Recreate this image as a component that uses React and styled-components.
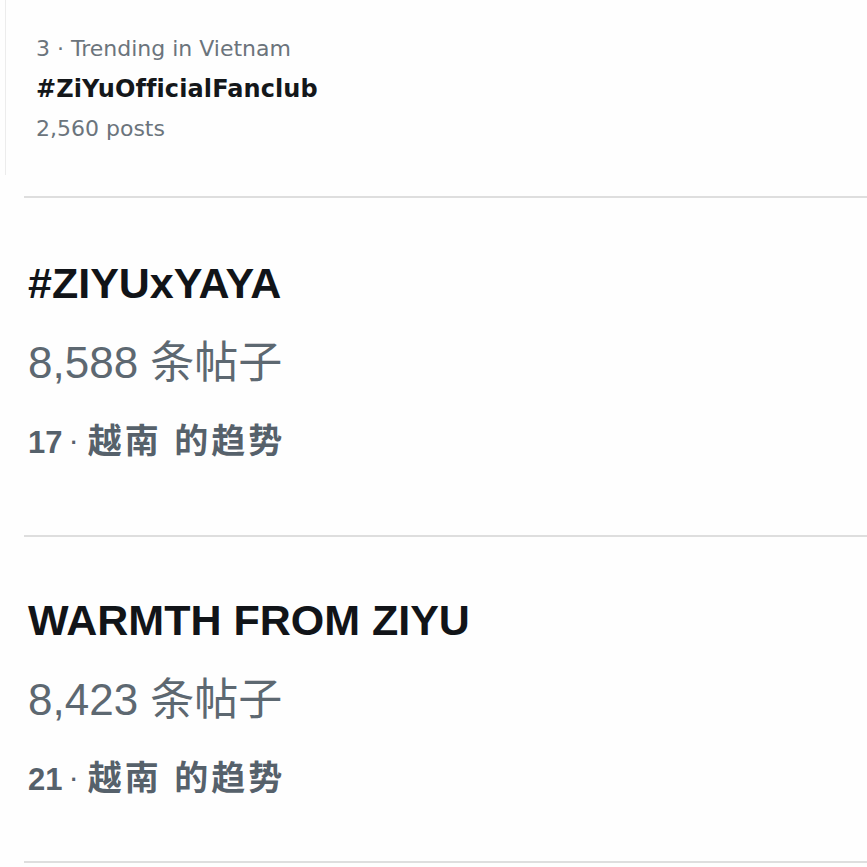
import React from 'react';
import styled, { createGlobalStyle } from 'styled-components';

const GlobalStyle = createGlobalStyle`
    body {
        margin: 0;
        background: #ffffff;
        font-family: "Liberation Sans", "Noto Sans CJK SC", sans-serif;
    }
`

const Page = styled.div`
    width: 867px;
    height: 867px;
    overflow: hidden;
    background: #fefefe;
`

const Card = styled.div`
    margin-left: 5px;
    padding: 29px 0 26px 30px;
    border-left: 1px solid #ececec;
    font-family: "DejaVu Sans", Inter, sans-serif;
`

const CardMeta = styled.div`
    line-height: 40px;
    font-size: 22px;
    color: #6b747c;
`

const CardTitle = styled.div`
    line-height: 40px;
    font-size: 24px;
    font-weight: 700;
    color: #14171a;
    letter-spacing: 0.1px;
`

const Divider = styled.hr`
    margin: ${props => props.top || 0}px 0 0 24px;
    border: 0;
    border-top: 2px solid #dedede;
    height: 0;
`

const Item = styled.div`
    padding: ${props => props.top}px 0 ${props => props.bottom}px 28px;
`

const Title = styled.div`
    line-height: 80px;
    font-size: 43px;
    font-weight: 700;
    color: #111418;
    white-space: nowrap;
`

const Posts = styled.div`
    line-height: 80px;
    font-size: 44px;
    color: #5d6871;
    white-space: nowrap;
`

const Trend = styled.div`
    height: 80px;
    line-height: 80px;
    font-size: 31px;
    font-weight: 700;
    color: #56616b;
    white-space: nowrap;
`

const Dot = styled.span`
    font-weight: 400;
    line-height: 1;
    margin: 0 9px 0 6px;
    vertical-align: 2px;
`

const Place = styled.span`
    font-size: 34px;
    line-height: 1;
    letter-spacing: 3px;
`

const trends = [
    { title: '#ZIYUxYAYA', posts: '8,588', rank: 17, top: 45, bottom: 52 },
    { title: 'WARMTH FROM ZIYU', posts: '8,423', rank: 21, top: 43, bottom: 41 },
]

function App() {
    return (
        <Page>
            <GlobalStyle />
            <Card>
                <CardMeta>3 · Trending in Vietnam</CardMeta>
                <CardTitle>#ZiYuOfficialFanclub</CardTitle>
                <CardMeta>2,560 posts</CardMeta>
            </Card>
            <Divider top={21} />
            {trends.map(t => (
                <React.Fragment key={t.title}>
                    <Item top={t.top} bottom={t.bottom}>
                        <Title>{t.title}</Title>
                        <Posts>{t.posts} 条帖子</Posts>
                        <Trend>{t.rank}<Dot>·</Dot><Place>越南 的趋势</Place></Trend>
                    </Item>
                    <Divider />
                </React.Fragment>
            ))}
        </Page>
    );
}

export default App;
